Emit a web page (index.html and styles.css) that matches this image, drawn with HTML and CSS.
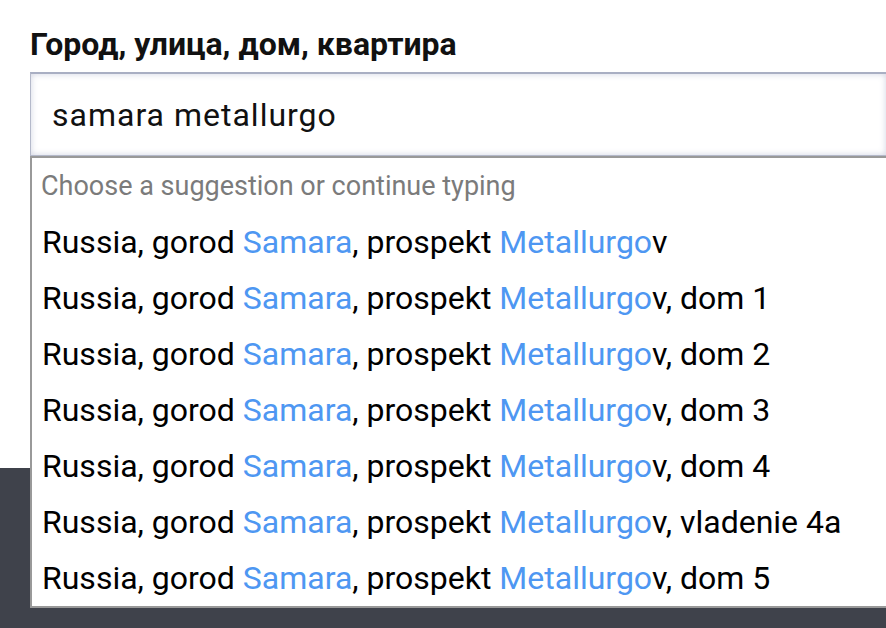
FILE: index.html
```html
<!DOCTYPE html>
<html lang="ru">
<head>
<meta charset="utf-8">
<title>Адрес</title>
<link rel="stylesheet" href="styles.css">
</head>
<body>
<div class="page">
  <section class="top">
    <div class="field">
      <label class="label" for="addr">Город, улица, дом, квартира</label>
      <div class="combo">
        <input id="addr" class="input" type="text" value="samara metallurgo">
        <ul class="menu">
          <li class="hint">Choose a suggestion or continue typing</li>
          <li class="item">Russia, gorod <span class="hl">Samara</span>, prospekt <span class="hl">Metallurgo</span>v</li>
          <li class="item">Russia, gorod <span class="hl">Samara</span>, prospekt <span class="hl">Metallurgo</span>v, dom 1</li>
          <li class="item">Russia, gorod <span class="hl">Samara</span>, prospekt <span class="hl">Metallurgo</span>v, dom 2</li>
          <li class="item">Russia, gorod <span class="hl">Samara</span>, prospekt <span class="hl">Metallurgo</span>v, dom 3</li>
          <li class="item">Russia, gorod <span class="hl">Samara</span>, prospekt <span class="hl">Metallurgo</span>v, dom 4</li>
          <li class="item">Russia, gorod <span class="hl">Samara</span>, prospekt <span class="hl">Metallurgo</span>v, vladenie 4a</li>
          <li class="item">Russia, gorod <span class="hl">Samara</span>, prospekt <span class="hl">Metallurgo</span>v, dom 5</li>
        </ul>
      </div>
    </div>
  </section>
  <section class="bottom"></section>
</div>
</body>
</html>
```
FILE: styles.css
```css
html, body {
  margin: 0;
  padding: 0;
  width: 886px;
  height: 628px;
  overflow: hidden;
  background: #ffffff;
}
body {
  font-family: Roboto, "Noto Sans", "Liberation Sans", sans-serif;
  color: #000;
}
.page {
  display: flex;
  flex-direction: column;
  height: 628px;
  overflow: hidden;
}
.top {
  height: 468px;
  flex: none;
  background: #fff;
  position: relative;
  z-index: 1;
}
.bottom {
  flex: 1;
  background: #3f424b;
}
.field {
  padding: 26px 0 0 30px;
  display: flex;
  flex-direction: column;
}
.label {
  font-weight: 700;
  font-size: 32px;
  line-height: 36px;
  color: #111;
  margin-bottom: 10px;
}
.combo {
  position: relative;
  width: 856px;
}
.input {
  display: block;
  box-sizing: border-box;
  width: 100%;
  height: 84px;
  margin: 0;
  padding: 0 0 0 21px;
  border: 1px solid #b4b9ca;
  border-top: 2px solid #a9afc3;
  border-right: none;
  box-shadow: inset 0 0 6px rgba(120, 130, 170, 0.35);
  font-family: Roboto, "Noto Sans", "Liberation Sans", sans-serif;
  font-size: 32px;
  letter-spacing: 1px;
  color: #111;
  background: #fff;
  outline: none;
}
.menu {
  position: absolute;
  left: 0;
  top: 84px;
  width: 100%;
  box-sizing: border-box;
  margin: 0;
  padding: 0;
  list-style: none;
  background: #fff;
  border: 2px solid #999;
  border-right: none;
}
.hint {
  height: 56px;
  line-height: 56px;
  padding-left: 9px;
  font-size: 27px;
  color: #7b7b7b;
  white-space: nowrap;
}
.item {
  height: 56px;
  line-height: 56px;
  padding-left: 10px;
  font-size: 32px;
  color: #000;
  white-space: nowrap;
}
.hl {
  color: #4e97f2;
}
```
